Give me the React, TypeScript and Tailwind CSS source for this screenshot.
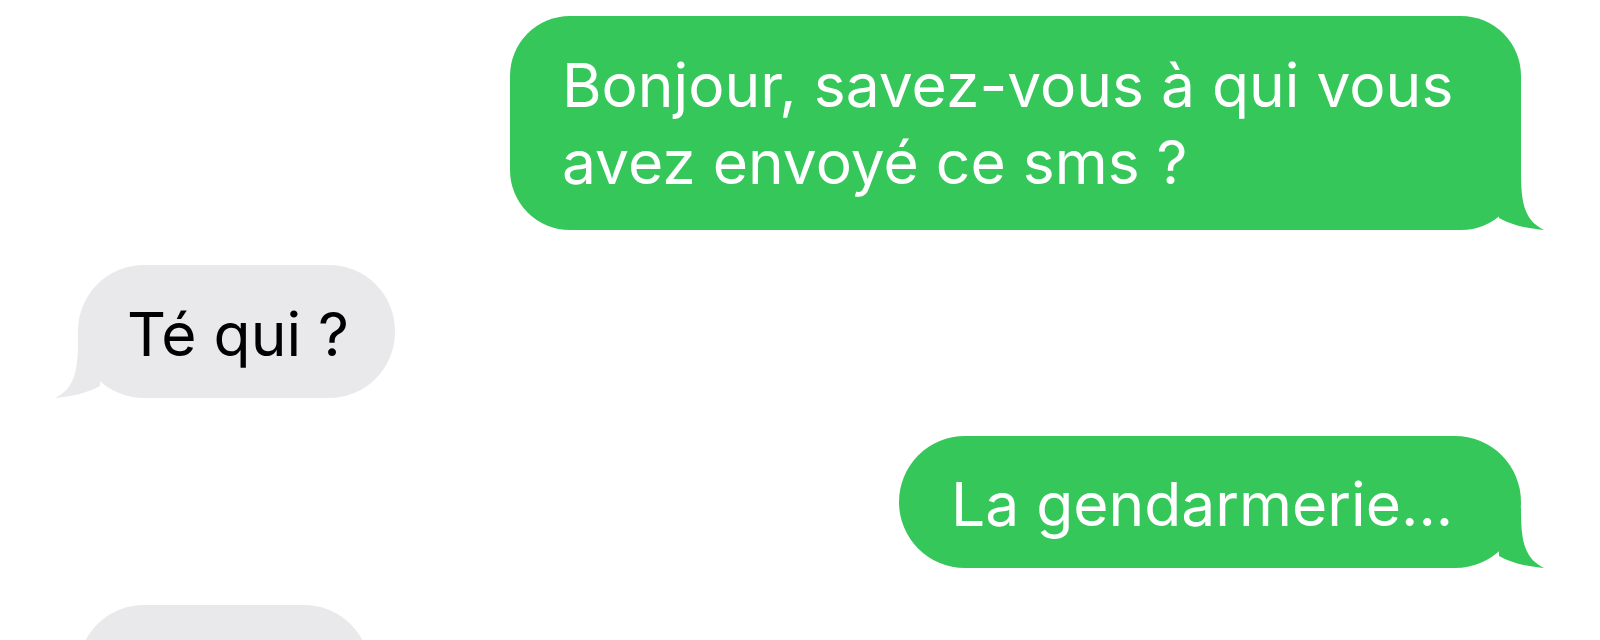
import React from 'react';

type Msg = {
  id: number;
  from: 'me' | 'them';
  text: string;
  box: string; // size, padding and corner radius for each bubble
};

const messages: Msg[] = [
  { id: 1, from: 'me', text: 'Bonjour, savez-vous à qui vous avez envoyé ce sms ?', box: 'w-[1011px] rounded-[60px] pl-[52px] pr-[60px] pt-[31px] pb-[29px]' },
  { id: 2, from: 'them', text: 'Té qui ?', box: 'w-[317px] rounded-[66px] pl-[49px] pt-[31px] pb-[25px]' },
  { id: 3, from: 'me', text: 'La gendarmerie...', box: 'w-[622px] rounded-[66px] pl-[52px] pt-[30px] pb-[25px]' },
  // last one is cut off by the bottom of the screen
  { id: 4, from: 'them', text: '', box: 'w-[292px] h-[133px] rounded-[66px]' },
];

// curved tail at the bottom corner of a bubble
const Tail = ({ color, flip }: { color: string; flip?: boolean }) => (
  <svg
    width="45"
    height="60"
    viewBox="0 0 45 60"
    className={`absolute bottom-0 ${flip ? '-left-[23px] -scale-x-100' : '-right-[23px]'}`}
  >
    <path d="M22 0 C22 30 24 50 45 60 C32 59 14 56 0 48 L0 0 Z" fill={color} />
  </svg>
);

const Bubble = ({ msg }: { msg: Msg }) => {
  const mine = msg.from === 'me';
  return (
    <div className={`relative ${msg.box} ${mine ? 'bg-[#35c759] text-white' : 'bg-[#e9e9eb] text-black'}`}>
      {msg.text && <p className="text-[60.5px] leading-[77px] relative z-10">{msg.text}</p>}
      <Tail color={mine ? '#35c759' : '#e9e9eb'} flip={!mine} />
    </div>
  );
};

export default function App() {
  return (
    <div
      className="w-[1600px] h-[640px] overflow-hidden bg-white pt-[16px] flex flex-col"
      style={{ fontFamily: 'Inter, "Liberation Sans", sans-serif' }}
    >
      {messages.map((m, i) => (
        <div
          key={m.id}
          className={`flex ${m.from === 'me' ? 'justify-end pr-[79px]' : 'justify-start pl-[78px]'} ${
            i === 1 ? 'mt-[35px]' : i === 2 ? 'mt-[38px]' : i === 3 ? 'mt-[37px]' : ''
          }`}
        >
          <Bubble msg={m} />
        </div>
      ))}
    </div>
  );
}
